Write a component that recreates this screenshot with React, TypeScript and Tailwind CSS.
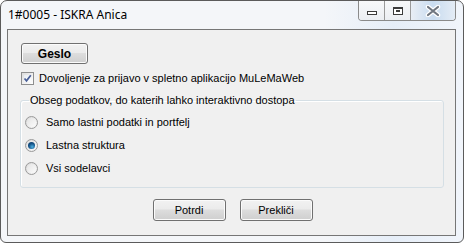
import React from "react";

function CheckBox() {
  return (
    <div className="w-[13px] h-[13px] border border-[#8e8f8f] bg-[linear-gradient(135deg,#dcdcdc,#ffffff)] p-[2px] shrink-0">
      <div className="w-full h-full bg-[linear-gradient(135deg,#e8edf3,#fbfcfd)] relative">
        <svg width="9" height="9" viewBox="0 0 9 9" className="absolute left-[-1px] top-[-1px]">
          <path d="M1.5 4.5 L3.5 6.8 L7.8 1.2" stroke="#4a5f97" strokeWidth="1.7" fill="none" />
        </svg>
      </div>
    </div>
  );
}

function Radio({ checked }: { checked?: boolean }) {
  return (
    <div className="w-[13px] h-[13px] rounded-full border border-[#9a9a9a] bg-[linear-gradient(135deg,#d8d8d8,#f8f8f8)] flex items-center justify-center shrink-0">
      <div className="w-[9px] h-[9px] rounded-full bg-[linear-gradient(135deg,#e4e4e4,#fbfbfb)] flex items-center justify-center">
        {checked && (
          <div className="w-[7px] h-[7px] rounded-full bg-[radial-gradient(circle_at_60%_70%,#4fb0e0,#16558a_50%,#0a2f58)]" />
        )}
      </div>
    </div>
  );
}

function WinButton({ children, bold, w }: { children: React.ReactNode; bold?: boolean; w: string }) {
  return (
    <div
      className={
        "h-[21px] rounded-[3px] border border-[#707070] flex items-center justify-center bg-[linear-gradient(#f2f2f2_0%,#ebebeb_45%,#dddddd_50%,#cfcfcf_100%)] shadow-[inset_0_0_0_1px_#fbfbfb] text-[11px] text-black " +
        (bold ? "font-bold text-[12px] " : "") +
        w
      }
    >
      {children}
    </div>
  );
}

export default function App() {
  return (
    <div className="w-[464px] h-[243px] flex flex-col rounded-t-[7px] rounded-b-[6px] border border-[#5b5b5b] bg-[linear-gradient(90deg,#f4f6f9_0%,#f4f6f9_70%,#e6eef8_85%,#f1f5fb_100%)] overflow-hidden font-['Liberation_Sans',Arial,sans-serif]">
      <div className="h-[28px] flex items-start pl-[7px] pr-[7px] shrink-0">
        <div className="pt-[6px] text-[12px] leading-[16px] text-black font-['Noto_Sans',sans-serif]">1#0005 - ISKRA Anica</div>
        <div className="ml-auto flex h-[20px] border border-t-0 border-[#8a8a8a] rounded-b-[4px] overflow-hidden shadow-[inset_0_0_0_1px_#ffffff]">
          <div className="w-[26px] h-full flex items-center justify-center bg-[linear-gradient(#f7f8fa,#eceff3)] border-r border-[#9a9a9a]">
            <div className="w-[10px] h-[4px] border border-[#3c3c3c] bg-white mt-[5px]" />
          </div>
          <div className="w-[26px] h-full flex items-center justify-center bg-[linear-gradient(#f7f8fa,#eceff3)] border-r border-[#9a9a9a]">
            <div className="w-[10px] h-[8px] border border-[#3c3c3c] border-t-[2px] bg-white flex items-center justify-center">
              <div className="w-[4px] h-[2px] bg-white border border-[#3c3c3c]" />
            </div>
          </div>
          <div className="w-[44px] h-full flex items-center justify-center bg-[linear-gradient(90deg,#e9eef5,#c9dcf0_50%,#e4ecf5)]">
            <svg width="16" height="12" viewBox="0 0 16 12">
              <path d="M3 2 L13 10 M13 2 L3 10" stroke="#ffffff" strokeWidth="4.5" strokeLinecap="round" />
              <path d="M3 2 L13 10 M13 2 L3 10" stroke="#6f7680" strokeWidth="2.2" strokeLinecap="round" />
            </svg>
          </div>
        </div>
      </div>
      <div className="ml-[6px] mr-[7px] h-[207px] border border-[#767676] bg-[#f0f0f0] flex flex-col text-[11px] text-black">
        <div className="ml-[13px] mt-[13px]">
          <WinButton bold w="w-[67px]">Geslo</WinButton>
        </div>
        <div className="ml-[13px] mt-[8px] flex items-center gap-[5px] h-[13px]">
          <CheckBox />
          <span className="leading-[13px]">Dovoljenje za prijavo v spletno aplikacijo MuLeMaWeb</span>
        </div>
        <fieldset className="ml-[12px] mt-[9px] w-[424px] h-[94px] border border-[#d5dfe5] rounded-[3px] shadow-[inset_1px_1px_0_#ffffff] px-[4px]">
          <legend className="ml-[4px] px-[1px] leading-[13px]">Obseg podatkov, do katerih lahko interaktivno dostopa</legend>
          <div className="flex flex-col gap-[10px] mt-[9px]">
            <div className="flex items-center gap-[8px] h-[13px]">
              <Radio />
              <span>Samo lastni podatki in portfelj</span>
            </div>
            <div className="flex items-center gap-[8px] h-[13px]">
              <Radio checked />
              <span>Lastna struktura</span>
            </div>
            <div className="flex items-center gap-[8px] h-[13px]">
              <Radio />
              <span>Vsi sodelavci</span>
            </div>
          </div>
        </fieldset>
        <div className="mt-[11px] flex justify-center gap-[14px] pl-[2px]">
          <WinButton w="w-[73px] !h-[22px]">Potrdi</WinButton>
          <WinButton w="w-[73px] !h-[22px]">Prekliči</WinButton>
        </div>
      </div>
    </div>
  );
}
